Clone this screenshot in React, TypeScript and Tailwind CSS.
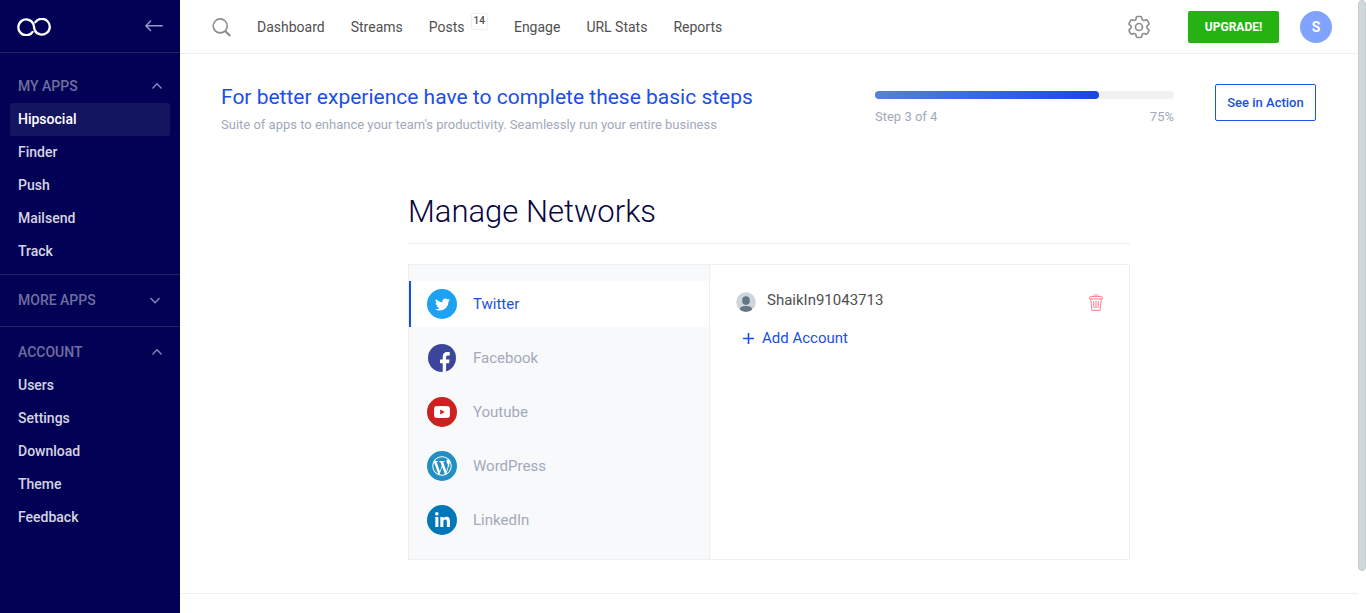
import type { ReactNode } from "react";
import { FaLinkedinIn, FaTwitter, FaWordpressSimple } from "react-icons/fa";
import { HiOutlineCog6Tooth } from "react-icons/hi2";

function Logo() {
  return (
    <svg viewBox="0 0 34 18" className="mt-0.5 h-[18px] w-[34px]" fill="none" stroke="#fff" strokeWidth="2.3" strokeLinecap="round" aria-hidden="true">
      <path d="M15.6 14A7.9 7.9 0 1 1 16.2 5.6C17.2 8 16.7 10.2 18 12.6A7.9 7.9 0 1 0 18.4 4.2" />
    </svg>
  );
}

function Chevron({ up }: { up: boolean }) {
  return (
    <svg viewBox="0 0 10 10" className="h-[10px] w-[10px]" fill="none" stroke="#8a8ab5" strokeWidth="1.3" aria-hidden="true">
      <path d={up ? "M0.5 7.5 5 2.8 9.5 7.5" : "M0.5 3 5 7.7 9.5 3"} />
    </svg>
  );
}

function Section({ title, open, items, active, first }: { title: string; open: boolean; items: string[]; active?: string; first?: boolean }) {
  return (
    <section className={first ? "pt-[17px] pb-1.5" : "border-t border-[#232467] py-[9px]"}>
      <button
        type="button"
        aria-expanded={open}
        className={`flex h-[33px] w-full items-center justify-between pb-0.5 pl-[18px] text-sm font-medium text-[#6f6f9f] ${open ? "pr-[18px]" : "pr-5"}`}
      >
        {title}
        <Chevron up={open} />
      </button>
      <ul className="px-2.5">
        {items.map((item) => (
          <li key={item}>
            <a
              href="#"
              className={`flex h-[33px] items-center rounded-xs px-2 pb-0.5 text-sm font-medium ${item === active ? "bg-[#14155f] text-white" : "text-[#d5d5e2]"}`}
            >
              {item}
            </a>
          </li>
        ))}
      </ul>
    </section>
  );
}

function Disc({ color, children }: { color: string; children: ReactNode }) {
  return <span className={`flex size-[30px] shrink-0 items-center justify-center rounded-full text-white ${color}`}>{children}</span>;
}

const networks = [
  { name: "Twitter", icon: <Disc color="bg-[#1da1f2]"><FaTwitter size={15} /></Disc> },
  {
    name: "Facebook",
    icon: (
      <svg viewBox="0 0 30 30" className="size-[30px]" aria-hidden="true">
        <circle cx="15" cy="15" r="14" fill="#3b459c" />
        <path d="M15.7 29V20.2H13V16.6H15.7V13.8C15.7 10.6 17.5 9.1 20.2 9.1C21.4 9.1 22.4 9.2 22.8 9.3V12.5H21C19.5 12.5 19.1 13.3 19.1 14.4V16.6H22.6L22.1 20.2H19.1V28.4A14 14 0 0 1 15.7 29Z" fill="#fff" />
      </svg>
    ),
  },
  {
    name: "Youtube",
    icon: (
      <Disc color="bg-[#cd2020]">
        <svg viewBox="0 0 16 12" className="h-3 w-4" aria-hidden="true">
          <path d="M1.8.3Q8-.1 14.2.3 15.6.4 15.8 1.9 16.1 6 15.8 10.1 15.6 11.6 14.2 11.7 8 12.1 1.8 11.7.4 11.6.2 10.1-.1 6 .2 1.9.4.4 1.8.3Z" fill="#fff" />
          <path d="M6.2 3.6 10.8 6 6.2 8.4Z" fill="#cd2020" />
        </svg>
      </Disc>
    ),
  },
  { name: "WordPress", icon: <Disc color="bg-[#218fc1]"><FaWordpressSimple size={20} /></Disc> },
  { name: "LinkedIn", icon: <Disc color="bg-[#0077b7]"><FaLinkedinIn size={17} /></Disc> },
];

function TrashIcon() {
  return (
    <svg viewBox="0 0 14 17" className="h-[17px] w-[14px]" fill="none" stroke="#fb7f8c" aria-hidden="true">
      <path d="M4.7 2.3Q4.8.7 7 .7T9.3 2.3" />
      <path d="M.6 5V3.6Q.6 2.6 1.8 2.6H12.2Q13.4 2.6 13.4 3.6V5Z" />
      <path d="M1.7 5 2.9 16.4H11.1L12.3 5" />
      <path d="M4.6 7 5 14M7 7V14M9.4 7 9 14" />
    </svg>
  );
}

export default function App() {
  return (
    <div className="flex min-h-screen bg-white font-['Roboto',sans-serif] text-[#4f4f4f]">
      <aside className="w-[180px] shrink-0 bg-[#030156]">
        <div className="flex h-[53px] items-center justify-between border-b border-[#232467] pr-[17px] pl-[17px]">
          <Logo />
          <button type="button" aria-label="Collapse menu" className="flex">
            <svg viewBox="0 0 18 12" className="h-3 w-[18px]" fill="none" stroke="#9a9ac8" strokeWidth="1.4" strokeLinecap="round" aria-hidden="true">
              <path d="M17.3 5.8H.9M5.6 1 .9 5.8 5.6 10.6" />
            </svg>
          </button>
        </div>
        <nav aria-label="Apps">
          <Section title="MY APPS" open first items={["Hipsocial", "Finder", "Push", "Mailsend", "Track"]} active="Hipsocial" />
          <Section title="MORE APPS" open={false} items={[]} />
          <Section title="ACCOUNT" open items={["Users", "Settings", "Download", "Theme", "Feedback"]} />
        </nav>
      </aside>

      <div className="flex min-w-0 flex-1 flex-col">
        <header className="flex h-[54px] items-center border-b border-[#efeff1] pr-[26px] pl-8">
          <button type="button" aria-label="Search" className="mr-[26px] flex pt-px">
            <svg viewBox="0 0 19 19" className="size-[19px]" fill="none" stroke="#8d8d8d" aria-hidden="true">
              <circle cx="8.2" cy="7.9" r="7" strokeWidth="1.6" />
              <path d="M13.2 12.9 18.2 18" strokeWidth="2.2" />
            </svg>
          </button>
          <nav aria-label="Main" className="flex items-center gap-[26px] pt-px text-sm">
            <a href="#">Dashboard</a>
            <a href="#">Streams</a>
            <a href="#" className="flex items-center gap-1.5">
              Posts
              <span className="-mt-3 flex h-[17px] items-center rounded-xs border border-[#efeff1] px-0.5 text-[10px] font-medium">14</span>
            </a>
            <a href="#">Engage</a>
            <a href="#">URL Stats</a>
            <a href="#">Reports</a>
          </nav>
          <div className="ml-auto flex items-center">
            <button type="button" aria-label="Settings" className="mr-[35px] text-[#8d8d8d]">
              <HiOutlineCog6Tooth size={28} strokeWidth={1.4} />
            </button>
            <button type="button" className="mr-[21px] h-8 w-[91px] rounded-xs bg-[#25b312] text-[12px] font-bold text-white">UPGRADE!</button>
            <button type="button" aria-label="Profile" className="size-8 rounded-full bg-[#82a2ff] text-sm font-bold text-white">S</button>
          </div>
        </header>

        <main className="flex-1 pb-[33px]">
          <section className="flex items-start pt-[30px] pr-[42px] pl-[41px]">
            <div className="flex-1">
              <h2 className="text-[21px] leading-[26px] text-[#1b4fe4]">For better experience have to complete these basic steps</h2>
              <p className="mt-1 text-[13px] leading-[22px] text-[#a1a9bb]">Suite of apps to enhance your team's productivity. Seamlessly run your entire business</p>
            </div>
            <div className="mr-[41px] w-[299px] pt-[7px]">
              <div role="progressbar" aria-label="Setup progress" aria-valuenow={75} className="h-2 rounded-full bg-[#f1f1f2]">
                <div className="h-2 w-3/4 rounded-full bg-linear-to-r from-[#5580dc] to-[#1b45e6]" />
              </div>
              <div className="mt-2 flex justify-between text-[13px] leading-5 text-[#a1a9bb]">
                <span>Step 3 of 4</span>
                <span>75%</span>
              </div>
            </div>
            <button type="button" className="h-[37px] w-[101px] rounded-xs border border-[#1b55e2] text-[13px] font-medium text-[#1b4fe4]">See in Action</button>
          </section>

          <section className="mx-auto mt-14 w-full max-w-[722px]">
            <h1 className="border-b border-[#efeff1] pb-[11px] text-[31px] leading-[40px] font-light text-[#060540]">Manage Networks</h1>
            <div className="mt-5 flex border border-[#efeff1]">
              <ul className="flex w-[301px] flex-col gap-2 border-r border-[#efeff1] bg-[#f8f9fb] py-4">
                {networks.map(({ name, icon }, i) => (
                  <li key={name}>
                    <button
                      type="button"
                      className={`flex h-[46px] w-full items-center gap-4 border-l-2 pl-4 text-[15px] ${i === 0 ? "border-[#1450e2] bg-white text-[#1b4fe4]" : "border-transparent text-[#a1a9bb]"}`}
                    >
                      {icon}
                      {name}
                    </button>
                  </li>
                ))}
              </ul>
              <div className="flex-1 pt-[23px] pr-[26px] pl-[26px]">
                <div className="flex items-center">
                  <svg viewBox="0 0 20 20" className="mt-1 size-5" aria-hidden="true">
                    <clipPath id="avatar-clip"><circle cx="10" cy="10" r="10" /></clipPath>
                    <g clipPath="url(#avatar-clip)">
                      <circle cx="10" cy="10" r="10" fill="#ccd6dd" />
                      <rect x="6.2" y="4.3" width="7.6" height="8.6" rx="3.8" fill="#657786" />
                      <path d="M4 20V17Q4 14 10 14T16 17V20Z" fill="#657786" />
                    </g>
                  </svg>
                  <span className="ml-[11px] text-[15px] leading-5">ShaikIn91043713</span>
                  <button type="button" aria-label="Delete account" className="mt-1 ml-auto flex"><TrashIcon /></button>
                </div>
                <button type="button" className="mt-4 ml-[7px] flex items-center gap-2 text-[15px] leading-5 text-[#1b4fe4]">
                  <svg viewBox="0 0 11 11" className="size-[11px]" stroke="currentColor" strokeWidth="1.6" aria-hidden="true"><path d="M5.5 0V11M0 5.5H11" /></svg>
                  Add Account
                </button>
              </div>
            </div>
          </section>
        </main>
        <footer className="h-5 border-t border-[#efeff1]" />
      </div>

      <div aria-hidden="true" className="w-2 shrink-0">
        <div className="h-[571px] rounded-full border border-[#c5cdd0] bg-[#cfd8dc]" />
      </div>
    </div>
  );
}
